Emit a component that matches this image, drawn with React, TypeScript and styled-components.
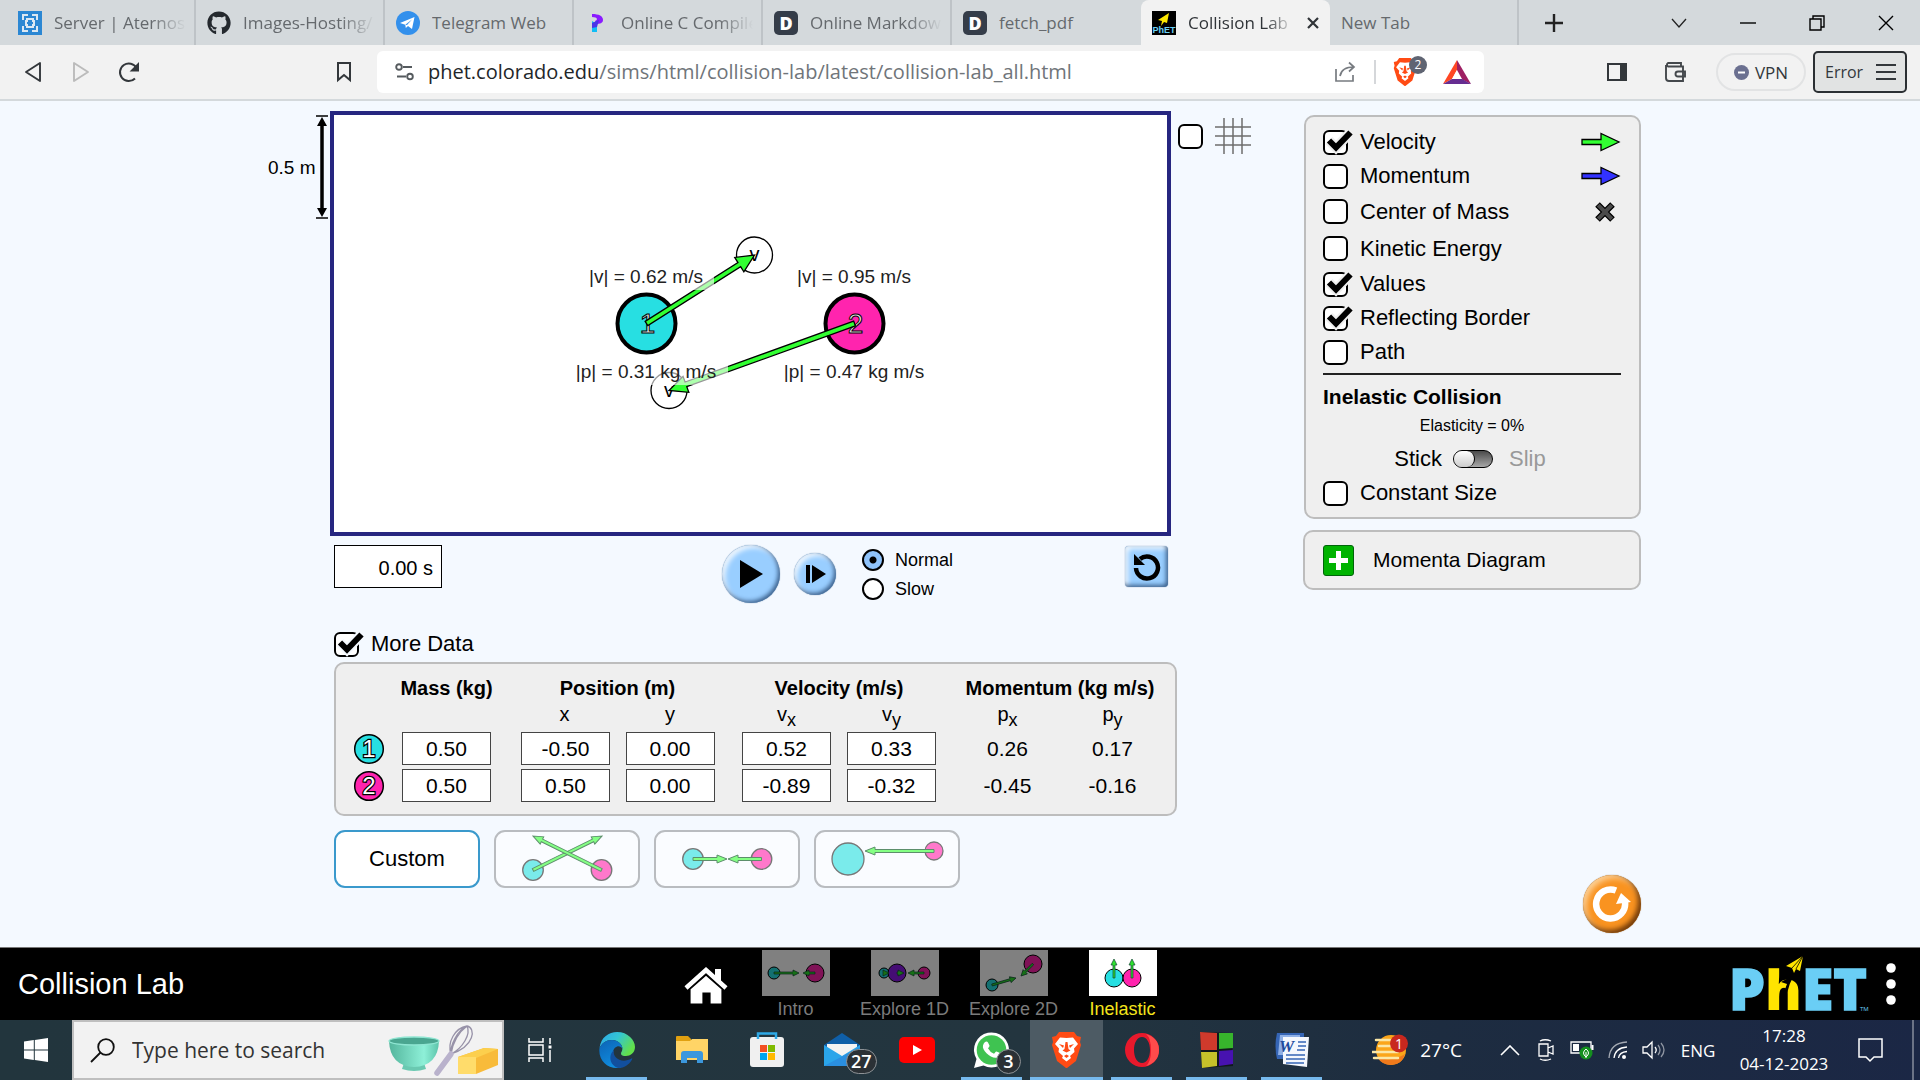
import React from 'react';
import styled, { createGlobalStyle } from 'styled-components';
import { FaGithub } from 'react-icons/fa6';

const ui = '"Open Sans", "Noto Sans", sans-serif';
const sim = '"Liberation Sans", Arial, sans-serif';
const SIM_BG = '#f4f9ff';
const PANEL_BG = '#efefef';
const CYAN = '#27dfe2';
const PINK = '#ff24ae';
const GREEN = '#32ff32';

const GlobalStyle = createGlobalStyle`
  *, *::before, *::after { box-sizing: border-box; }
  body { margin: 0; background: ${SIM_BG}; font-family: ${sim}; color: #000; }
  button { font: inherit; color: inherit; border: 0; padding: 0; background: none; cursor: pointer; }
  input { font: inherit; color: inherit; margin: 0; }
  svg { display: block; flex: none; }
`;

const Page = styled.div`
  display: flex;
  flex-direction: column;
  min-height: 100vh;
`;

/* ---------- Browser window ---------- */

const TabStrip = styled.div`
  display: flex;
  align-items: stretch;
  height: 45px;
  padding-left: 7px;
  background: #d4d9dc;
  font-family: ${ui};
`;

const Tab = styled.button<{ $active?: boolean; $plain?: boolean }>`
  display: flex;
  align-items: center;
  gap: 12px;
  flex: 0 1 189px;
  min-width: 0;
  padding: 0 ${p => (p.$active ? 10 : 8)}px 0 11px;
  font-size: 17px;
  line-height: 24px;
  text-align: left;
  color: ${p => (p.$active ? '#303438' : '#65696d')};
  background: ${p => (p.$active ? '#f2f2f2' : 'transparent')};
  border-radius: ${p => (p.$active ? '8px 8px 0 0' : '0')};
  border-right: ${p => (p.$active || p.$plain ? '0' : '2px solid #bec3c7')};
`;

const TabTitle = styled.span<{ $fade?: boolean }>`
  flex: 1;
  min-width: 0;
  overflow: hidden;
  white-space: nowrap;
  mask-image: ${p => (p.$fade ? 'linear-gradient(to right, #000 74%, transparent)' : 'none')};
`;

const CaptionButton = styled.button`
  display: flex;
  align-items: center;
  justify-content: center;
  width: 69px;
`;

const NewTabButton = styled(CaptionButton)`
  margin-right: auto;
`;

const Toolbar = styled.div`
  display: flex;
  align-items: center;
  height: 56px;
  padding: 0 13px 0 9px;
  background: #f2f2f2;
  border-bottom: 2px solid #d4d9dc;
  font-family: ${ui};
  color: #33373b;
`;

const ToolButton = styled.button<{ $wide?: boolean }>`
  display: flex;
  align-items: center;
  justify-content: center;
  width: ${p => (p.$wide ? 58 : 48)}px;
  height: 42px;
`;

const BookmarkButton = styled(ToolButton)`
  margin-left: 167px;
`;

const AddressBar = styled.div`
  display: flex;
  align-items: center;
  flex: 1;
  min-width: 0;
  height: 42px;
  margin: 0 104px 0 9px;
  padding: 0 13px 0 18px;
  gap: 13px;
  border-radius: 6px;
  background: #fff;
`;

const Url = styled.div`
  flex: 1;
  min-width: 0;
  overflow: hidden;
  white-space: nowrap;
  font-size: 20px;
  line-height: 28px;
  color: #70757a;
  outline: 0;
`;

const UrlHost = styled.span`
  color: #222629;
`;

const AddressActions = styled.div`
  display: flex;
  align-items: center;
  gap: 17px;
`;

const ActionDivider = styled.span`
  width: 2px;
  height: 24px;
  background: #d5d7da;
`;

const BadgeHolder = styled.span`
  position: relative;
  display: flex;
  margin-right: 9px;
`;

const ShieldBadge = styled.span`
  position: absolute;
  top: -2px;
  right: -10px;
  width: 18px;
  height: 18px;
  border-radius: 9px;
  background: #5f6472;
  color: #fff;
  font-size: 12px;
  line-height: 18px;
  text-align: center;
`;

const VpnButton = styled.button`
  display: flex;
  align-items: center;
  justify-content: center;
  gap: 6px;
  width: 90px;
  height: 38px;
  margin: 0 7px 0 12px;
  border: 2px solid #e2e3e4;
  border-radius: 19px;
  font-size: 17px;
`;

const ErrorButton = styled.button`
  display: flex;
  align-items: center;
  justify-content: space-between;
  width: 94px;
  height: 42px;
  padding: 0 9px 0 10px;
  border: 2px solid #2b2f33;
  border-radius: 5px;
  background: #e1e3e3;
  font-size: 16px;
`;

/* ---------- Simulation ---------- */

const SimArea = styled.main`
  flex: 1;
  padding: 10px 11px 14px 0;
  background: ${SIM_BG};
`;

const SimGrid = styled.div`
  display: grid;
  grid-template-columns: 62px minmax(0, 1fr) 338px;
  max-width: 1373px;
  margin: 0 auto;
`;

const Ruler = styled.div`
  display: flex;
  justify-content: space-between;
  height: 105px;
  margin-top: 4px;
  padding-right: 2px;
  font-size: 19px;
  white-space: nowrap;
`;

const RulerLabel = styled.span`
  line-height: 106px;
`;

const Workspace = styled.div`
  display: flex;
  flex-direction: column;
  min-width: 0;
`;

const StageRow = styled.div`
  display: flex;
  align-items: flex-start;
`;

const Stage = styled.div`
  flex: 1;
  min-width: 0;
  border: 4px solid #262680;
  background: #fff;
`;

const GridToggle = styled.label`
  display: flex;
  align-items: center;
  gap: 12px;
  width: 125px;
  height: 36px;
  margin: 7px 0 0 7px;
`;

const Below = styled.div`
  display: flex;
  flex-direction: column;
  align-items: flex-start;
  padding: 9px 126px 0 4px;
`;

const Controls = styled.div`
  display: flex;
  align-self: stretch;
  align-items: flex-start;
  height: 58px;
  margin-right: 9px;
`;

const Timer = styled.output`
  width: 108px;
  height: 43px;
  padding-right: 8px;
  border: 1px solid #000;
  background: #fff;
  font-size: 20px;
  line-height: 44px;
  text-align: right;
`;

const Transport = styled.div`
  display: flex;
  align-items: center;
  gap: 14px;
  margin-left: 280px;
`;

const glossy = `
  display: flex;
  align-items: center;
  justify-content: center;
  background: #99ceff;
  box-shadow: inset -2px -2px 4px rgba(10, 40, 80, .65), inset 3px 3px 5px rgba(255, 255, 255, .85), 0 0 1px #466c94;
`;

const RoundButton = styled.button<{ $size: number }>`
  ${glossy}
  width: ${p => p.$size}px;
  height: ${p => p.$size}px;
  border-radius: 50%;
`;

const RestartButton = styled.button`
  ${glossy}
  width: 43px;
  height: 41px;
  margin: 1px 0 0 auto;
  border-radius: 4px;
`;

const SpeedGroup = styled.div`
  margin-left: 12px;
`;

const RadioLabel = styled.label`
  display: flex;
  align-items: center;
  gap: 11px;
  height: 29px;
  font-size: 18px;
  line-height: 30px;
`;

const Radio = styled.input`
  appearance: none;
  width: 22px;
  height: 22px;
  border: 2px solid #000;
  border-radius: 50%;
  background: #fff;
  &:checked { background: radial-gradient(circle, #000 3px, #8fc3fb 4px); }
`;

const CheckLabel = styled.label<{ $tall?: boolean }>`
  display: flex;
  align-items: center;
  gap: 12px;
  height: ${p => (p.$tall ? 37 : 34)}px;
  font-size: 22px;
`;

const MoreDataLabel = styled(CheckLabel)`
  height: 28px;
  margin: 27px 0 4px;
`;

const CheckSlot = styled.span`
  position: relative;
  display: flex;
`;

const CheckBox = styled.input`
  appearance: none;
  width: 25px;
  height: 25px;
  border: 2px solid #000;
  border-radius: 6px;
  background: #fff;
  & + svg { display: none; }
  &:checked + svg { display: block; }
`;

const CheckMark = styled.svg`
  position: absolute;
  left: 0;
  top: -2px;
  pointer-events: none;
`;

const Panel = styled.section`
  border: 2px solid #bdbdbd;
  border-radius: 10px;
  background: ${PANEL_BG};
`;

const DataPanel = styled(Panel)`
  align-self: stretch;
  padding: 10px 0;
`;

const DataTable = styled.table`
  table-layout: fixed;
  border-collapse: collapse;
  width: 829px;
  font-size: 21px;
  text-align: center;
`;

const Cell = styled.td<{ $lead?: number }>`
  height: 37px;
  padding: 0 0 0 ${p => p.$lead ?? 0}px;
`;

const Head = styled.th<{ $lead?: number; $sub?: boolean }>`
  height: 28px;
  padding: 0 0 ${p => (p.$sub ? 4 : 0)}px ${p => p.$lead ?? 0}px;
  font-size: 20px;
  font-weight: ${p => (p.$sub ? 400 : 700)};
  line-height: 24px;
  white-space: nowrap;
`;

const Sub = styled.sub`
  font-size: 18px;
  line-height: 0;
`;

const NumberBox = styled.input`
  display: block;
  width: 89px;
  height: 33px;
  margin: 0 auto;
  padding: 0;
  border: 1px solid #444;
  background: #fff;
  text-align: center;
`;

const BallIcon = styled.svg`
  margin: 0 auto;
`;

const Presets = styled.div`
  display: flex;
  gap: 14px;
  margin-top: 14px;
`;

const Preset = styled.button<{ $active?: boolean }>`
  display: flex;
  align-items: center;
  justify-content: center;
  width: 146px;
  height: 58px;
  border: 2px solid ${p => (p.$active ? '#3a99cc' : '#b9bcc0')};
  border-radius: 11px;
  background: ${p => (p.$active ? '#fff' : '#fafcff')};
  font-size: 22px;
`;

const Side = styled.aside`
  display: flex;
  flex-direction: column;
  margin-top: 4px;
`;

const ControlPanel = styled(Panel)`
  margin-left: 1px;
  padding: 8px 18px 7px 17px;
`;

const RowWithIcon = styled.div`
  display: flex;
  align-items: center;
  justify-content: space-between;
`;

const Rule = styled.hr`
  height: 2px;
  margin: 4px 0 9px;
  border: 0;
  background: #222;
`;

const PanelTitle = styled.h2`
  margin: 0;
  font-size: 21px;
  line-height: 26px;
`;

const Elasticity = styled.p`
  margin: 0;
  font-size: 16px;
  line-height: 32px;
  text-align: center;
`;

const StickSlip = styled.div`
  display: flex;
  align-items: center;
  justify-content: center;
  gap: 11px;
  height: 34px;
  padding-right: 4px;
  font-size: 22px;
`;

const Muted = styled.span`
  margin-left: 5px;
  color: #999;
`;

const Toggle = styled.input`
  appearance: none;
  display: flex;
  width: 40px;
  height: 18px;
  border: 1px solid #000;
  border-radius: 9px;
  background: linear-gradient(#4a4a4a, #a8a8a8);
  &::before {
    content: '';
    width: 21px;
    height: 16px;
    border-right: 1px solid #000;
    border-radius: 8px;
    background: linear-gradient(#fff, #ccc);
  }
`;

const MomentaPanel = styled(Panel)`
  display: flex;
  align-items: center;
  gap: 19px;
  height: 60px;
  margin-top: 11px;
  padding-left: 18px;
  font-size: 21px;
`;

const ExpandButton = styled.button`
  display: flex;
  align-items: center;
  justify-content: center;
  width: 31px;
  height: 31px;
  border: 1px solid #00640a;
  border-radius: 3px;
  background: #00b300;
`;

const ResetAll = styled.button`
  display: flex;
  align-items: center;
  justify-content: center;
  align-self: flex-end;
  width: 58px;
  height: 58px;
  margin-top: 285px;
  border-radius: 50%;
  background: #f99320;
  box-shadow: inset -3px -3px 5px rgba(70, 30, 0, .75), inset 3px 3px 6px rgba(255, 230, 190, .8), 0 0 1px #7a4a10;
`;

/* ---------- Simulation navigation bar ---------- */

const NavBar = styled.nav`
  display: grid;
  grid-template-columns: 1fr auto 1fr;
  align-items: center;
  height: 73px;
  padding: 0 24px 0 18px;
  background: #000;
  color: #fff;
  border-top: 1px solid #777;
`;

const SimTitle = styled.h1`
  margin: 0;
  font-size: 29px;
  font-weight: 400;
`;

const Screens = styled.div`
  display: flex;
  align-items: center;
  padding: 2px 53px 0 0;
`;

const HomeButton = styled.button`
  margin-right: 13px;
`;

const ScreenButton = styled.button<{ $active?: boolean }>`
  display: flex;
  flex-direction: column;
  align-items: center;
  gap: 2px;
  width: 109px;
  font-size: 18px;
  line-height: 22px;
  color: ${p => (p.$active ? '#f5e51b' : '#7b7b7b')};
  & svg { opacity: ${p => (p.$active ? 1 : 0.5)}; background: #fff; }
`;

const NavRight = styled.div`
  display: flex;
  align-items: center;
  justify-content: flex-end;
  gap: 16px;
`;

/* ---------- Desktop taskbar ---------- */

const Taskbar = styled.footer`
  display: flex;
  align-items: center;
  height: 60px;
  background: linear-gradient(to right, #22353d 0%, #23353f 55%, #1d2c40 75%, #1b2745 100%);
  color: #fff;
  font-family: ${ui};
`;

const StartButton = styled.button`
  display: flex;
  justify-content: center;
  width: 72px;
`;

const SearchBox = styled.label`
  display: flex;
  align-items: center;
  gap: 17px;
  width: 432px;
  height: 60px;
  padding: 0 4px 0 16px;
  border: 2px solid #bfbfbf;
  background: #f2f2f2;
  color: #222;
`;

const SearchInput = styled.input`
  flex: 1;
  min-width: 0;
  padding: 0;
  border: 0;
  background: none;
  font-size: 21px;
  outline: 0;
  &::placeholder { color: #333; opacity: 1; }
`;

const TaskButton = styled.button<{ $open?: boolean; $active?: boolean }>`
  position: relative;
  display: flex;
  align-items: center;
  justify-content: center;
  width: ${p => (p.$active ? 73 : 75)}px;
  height: 60px;
  margin: 0 ${p => (p.$active ? 1 : 0)}px;
  background: ${p => (p.$active ? '#4d5b64' : 'none')};
  &::after {
    content: '';
    position: absolute;
    bottom: 0;
    left: ${p => (p.$active ? 0 : 7)}px;
    right: ${p => (p.$active ? 0 : 7)}px;
    height: 3px;
    background: ${p => (p.$open || p.$active ? '#76b9ed' : 'transparent')};
  }
`;

const TaskBadge = styled.span`
  position: absolute;
  left: 42px;
  top: 29px;
  min-width: 25px;
  height: 25px;
  padding: 0 4px;
  border: 1px solid #8d9296;
  border-radius: 13px;
  background: #2b3136;
  font-size: 18px;
  font-weight: 600;
  line-height: 23px;
`;

const Tray = styled.div`
  display: flex;
  align-items: center;
  margin-left: auto;
  font-size: 17px;
`;

const TrayButton = styled.button<{ $w: number }>`
  display: flex;
  align-items: center;
  justify-content: center;
  width: ${p => p.$w}px;
  height: 60px;
`;

const ActionCenterButton = styled(TrayButton)`
  padding-right: 8px;
`;

const Weather = styled.button`
  display: flex;
  align-items: center;
  gap: 12px;
  margin-right: 30px;
  font-size: 19px;
`;

const Clock = styled.button`
  width: 104px;
  margin-left: 8px;
  font-size: 17px;
  line-height: 28px;
  text-align: center;
`;

const ShowDesktop = styled.button`
  width: 8px;
  height: 60px;
  border-left: 2px solid #6b7386;
`;

/* ---------- Drawings ---------- */

type Pt = [number, number];

function Arrow({ from, to, w = 5, head = 18, hw = 17, fill = GREEN, stroke = '#000', sw = 1.3 }: {
  from: Pt; to: Pt; w?: number; head?: number; hw?: number; fill?: string; stroke?: string; sw?: number;
}) {
  const dx = to[0] - from[0];
  const dy = to[1] - from[1];
  const len = Math.hypot(dx, dy);
  const deg = (Math.atan2(dy, dx) * 180) / Math.PI;
  const n = len - head;
  return (
    <polygon
      transform={`translate(${from[0]} ${from[1]}) rotate(${deg})`}
      points={`0,${-w / 2} ${n},${-w / 2} ${n},${-hw / 2} ${len},0 ${n},${hw / 2} ${n},${w / 2} 0,${w / 2}`}
      fill={fill}
      stroke={stroke}
      strokeWidth={sw}
    />
  );
}

function Ball({ x, y, color, n }: { x: number; y: number; color: string; n: number }) {
  return (
    <g>
      <circle cx={x} cy={y} r="29" fill={color} stroke="#000" strokeWidth="4" />
      <text x={x + 1} y={y + 9} fontSize="28" textAnchor="middle" fill="#e8e8e8" stroke="#000" strokeWidth="1">{n}</text>
    </g>
  );
}

function Reading({ x, y, w, text }: { x: number; y: number; w: number; text: string }) {
  return (
    <g>
      <rect x={x - w / 2} y={y - 20} width={w} height="27" fill="#fff" opacity="0.6" />
      <text x={x} y={y} fontSize="19" textAnchor="middle" fill="#222">{text}</text>
    </g>
  );
}

function Collision() {
  return (
    <svg width="100%" viewBox="334 115 833 417" fontFamily={sim} role="img" aria-label="Play area with two balls">
      <g fill="none" stroke="#000" strokeWidth="1.3">
        <circle cx="754.5" cy="255" r="18" />
        <circle cx="669" cy="390.5" r="18" />
      </g>
      <text x="754.5" y="261" fontSize="20" textAnchor="middle">v</text>
      <text x="669" y="397" fontSize="20" textAnchor="middle">v</text>
      <Ball x={646.5} y={323.5} color={CYAN} n={1} />
      <Ball x={854.5} y={323.5} color={PINK} n={2} />
      <Arrow from={[646.5, 323.5]} to={[754.5, 255]} />
      <Arrow from={[854.5, 323.5]} to={[669, 390.5]} />
      <Reading x={646} y={283} w={136} text="|v| = 0.62 m/s" />
      <Reading x={854} y={283} w={136} text="|v| = 0.95 m/s" />
      <Reading x={646} y={378} w={164} text="|p| = 0.31 kg m/s" />
      <Reading x={854} y={378} w={164} text="|p| = 0.47 kg m/s" />
    </svg>
  );
}

function Check({ label, checked, bg = PANEL_BG }: { label: string; checked?: boolean; bg?: string }) {
  return (
    <CheckSlot>
      <CheckBox type="checkbox" defaultChecked={checked} aria-label={label} />
      <CheckMark width="30" height="28" viewBox="0 0 30 28" fill="none">
        <path d="M6 12.5 13 19.5 27.5 4.5" stroke={bg} strokeWidth="10" />
        <path d="M6 12.5 13 19.5 27.5 4.5" stroke="#000" strokeWidth="6" />
      </CheckMark>
    </CheckSlot>
  );
}

function SmallBall({ n, color }: { n: number; color: string }) {
  return (
    <BallIcon width="32" height="32" viewBox="0 0 32 32" role="img" aria-label={`Ball ${n}`}>
      <circle cx="16" cy="16" r="14.3" fill={color} stroke="#000" strokeWidth="1.5" />
      <text x="16" y="24" fontSize="24" fontFamily={sim} textAnchor="middle" fill="#fff" stroke="#000" strokeWidth="2.4" paintOrder="stroke">{n}</text>
    </BallIcon>
  );
}

function PresetArt({ kind }: { kind: number }) {
  const a = { fill: '#84ff84', stroke: '#5c8f6b', sw: 1, w: 3, head: 10, hw: 8 };
  const c = { stroke: '#777', strokeWidth: 1.3 };
  return (
    <svg width="142" height="54" viewBox="-1 0 142 54">
      {kind === 0 && <>
        <circle cx="36" cy="38" r="10.3" fill="#7aebeb" {...c} />
        <circle cx="104.5" cy="38" r="10.3" fill="#ff78cb" {...c} />
        <Arrow from={[36, 38]} to={[105, 4]} {...a} />
        <Arrow from={[104.5, 38]} to={[36, 4]} {...a} />
      </>}
      {kind === 1 && <>
        <circle cx="36" cy="27" r="10.3" fill="#7aebeb" {...c} />
        <circle cx="104.5" cy="27" r="10.3" fill="#ff78cb" {...c} />
        <Arrow from={[36, 27]} to={[70, 27]} {...a} />
        <Arrow from={[104.5, 27]} to={[71, 27]} {...a} />
      </>}
      {kind === 2 && <>
        <circle cx="31" cy="27" r="16" fill="#7aebeb" {...c} />
        <circle cx="117" cy="19" r="9" fill="#ff78cb" {...c} />
        <Arrow from={[117, 19]} to={[48, 19]} {...a} />
      </>}
    </svg>
  );
}

function ScreenArt({ kind }: { kind: number }) {
  const a = { w: 2, head: 6, hw: 6, sw: 0.7, fill: '#2fe02f', stroke: '#143' };
  const c = { stroke: '#000', strokeWidth: 1 };
  return (
    <svg width="68" height="46" viewBox="0 0 68 46">
      {kind === 0 && <>
        <circle cx="12" cy="23" r="6" fill={CYAN} {...c} /><circle cx="53" cy="23" r="9" fill={PINK} {...c} />
        <Arrow from={[12, 23]} to={[37, 23]} {...a} /><Arrow from={[53, 23]} to={[41, 23]} {...a} />
      </>}
      {kind === 1 && <>
        <circle cx="13" cy="23" r="5" fill={CYAN} {...c} /><circle cx="26" cy="23" r="9" fill="#8a1be8" {...c} /><circle cx="53" cy="23" r="6" fill={PINK} {...c} />
        <Arrow from={[12, 23]} to={[18, 23]} {...a} /><Arrow from={[26, 23]} to={[33, 23]} {...a} /><Arrow from={[53, 23]} to={[37, 23]} {...a} />
      </>}
      {kind === 2 && <>
        <circle cx="12" cy="35" r="6" fill={CYAN} {...c} /><circle cx="53" cy="14" r="9" fill={PINK} {...c} />
        <Arrow from={[12, 35]} to={[36, 28]} {...a} /><Arrow from={[53, 14]} to={[41, 26]} {...a} />
      </>}
      {kind === 3 && <>
        <circle cx="25" cy="28" r="9" fill={CYAN} {...c} /><circle cx="43" cy="28" r="9" fill={PINK} {...c} />
        <Arrow from={[25, 28]} to={[25, 9]} {...a} /><Arrow from={[43, 28]} to={[43, 9]} {...a} />
      </>}
    </svg>
  );
}

function BraveLion({ width, height }: { width: number; height: number }) {
  return (
    <svg width={width} height={height} viewBox="0 0 31 36">
      <path d="M8 0h15l3 4 4 1-1 5 1 3-5 16-9 7h-1l-9-7L1 13l1-3-1-5 4-1z" fill="#ff4b14" />
      <path d="M15.500 6 9 5.500 4 12l4 4.500-.5 3.500 4.500 4-1 2 4.500 3.500L20 26l-1-2 4.500-4-.5-3.500 4-4.500-5-6.500z" fill="#fff" />
      <path d="M8 12l5 1.500-1 2.500zM23 12l-5 1.500 1 2.500zM14.500 10h2l1 7 2 1.500-4 2-4-2 2-1.500zM13 24l2.500-1.500L18 24l-2.500 2z" fill="#ff4b14" />
    </svg>
  );
}

function EdgeLogo() {
  return (
    <svg width="36" height="36" viewBox="0 0 36 36">
      <defs>
        <linearGradient id="edgeTop" x1="0" y1="0" x2="1" y2=".5"><stop offset="0" stopColor="#2ba6ea" /><stop offset=".5" stopColor="#33c5d4" /><stop offset="1" stopColor="#62e04b" /></linearGradient>
        <linearGradient id="edgeLeft" x1="0" y1="0" x2=".6" y2="1"><stop offset="0" stopColor="#0c63b5" /><stop offset="1" stopColor="#1090e2" /></linearGradient>
      </defs>
      <path d="M.5 16C2 5 10 0 18 0c11 0 18 8 18 15 0 6-5 9-9 9-5 0-6-2-4-5 2-5-3-11-10-11C7 8 3 11 .5 16z" fill="url(#edgeTop)" />
      <path d="M.5 16C3 11 7 8 13 8c6 0 10.500 4.500 10.500 9-2-5-9-3-9.500 3-.5 8 7 13 14 11-3 3-6 5-10 5C7 36-1 27 .5 16z" fill="url(#edgeLeft)" />
      <path d="M15 18c-2 8 8 14 17.500 8.500.8-.4 1 .2.500 1C30 33 25 36 20 36c-8-1-12-12-5-18z" fill="#124f9d" />
    </svg>
  );
}

function Favicon({ kind }: { kind: string }) {
  if (kind === 'github') return <FaGithub size={24} color="#24292e" />;
  if (kind === 'telegram') return (
    <svg width="24" height="24" viewBox="0 0 24 24"><circle cx="12" cy="12" r="12" fill="#3390ec" /><path d="M4 12 18.500 6 16 18 12 15 9.800 17 9.300 13.800z" fill="#fff" /><path d="M9.300 13.800 16 8.500 11 14z" fill="#3390ec" /></svg>
  );
  if (kind === 'aternos') return (
    <svg width="24" height="24" viewBox="0 0 24 24" fill="none" stroke="#dce8f2" strokeWidth="2"><path fill="#2b87d3" stroke="none" d="M0 0h24v24H0z" /><path d="M10 4H5v5M14 4h5v5M10 20H5v-5M14 20h5v-5M9 8h6v2h1v4h-1v2H9v-2H8v-4h1z" /></svg>
  );
  if (kind === 'compiler') return (
    <svg width="24" height="24" viewBox="0 0 24 24"><path d="M7 3c7 0 11 2 11 6 0 3-3 4-7 4l-1-3c3-1 3-4-3-4z" fill="#8a1bff" /><path d="M7 10l5 3v8H7z" fill="#11bdf5" /><path d="M7 12l7-3-2 7-5 1z" fill="#4b35e8" /></svg>
  );
  if (kind === 'phet') return (
    <svg width="24" height="24" viewBox="0 0 24 24"><path d="M0 0h24v24H0z" /><path d="M17 2 6 9l4 1-1 5 3-4 3 1z" fill="#fde800" /><text x="12" y="22" fontSize="9" fontWeight="700" fontFamily={sim} textAnchor="middle" fill="#6ad0f6">PhET</text></svg>
  );
  return (
    <svg width="24" height="24" viewBox="0 0 24 24"><rect width="24" height="24" rx="5" fill="#353d49" /><text x="12" y="18.500" fontSize="18" fontWeight="800" fontFamily={ui} textAnchor="middle" fill="#fff">D</text></svg>
  );
}

const tabs = [
  { icon: 'aternos', title: 'Server | Aternos |', fade: true },
  { icon: 'github', title: 'Images-Hosting/', fade: true },
  { icon: 'telegram', title: 'Telegram Web' },
  { icon: 'compiler', title: 'Online C Compiler', fade: true },
  { icon: 'docs', title: 'Online Markdown', fade: true },
  { icon: 'docs', title: 'fetch_pdf', plain: true },
];

function BrowserChrome() {
  return (
    <header>
      <TabStrip>
        {tabs.map(t => (
          <Tab key={t.title} $plain={t.plain}>
            <Favicon kind={t.icon} />
            <TabTitle $fade={t.fade}>{t.title}</TabTitle>
          </Tab>
        ))}
        <Tab $active>
          <Favicon kind="phet" />
          <TabTitle $fade>Collision Lab</TabTitle>
          <svg width="14" height="14" viewBox="0 0 14 14" stroke="#303438" strokeWidth="2.200"><path d="M2 2l10 10M12 2 2 12" /></svg>
        </Tab>
        <Tab><TabTitle>New Tab</TabTitle></Tab>
        <NewTabButton aria-label="New tab">
          <svg width="18" height="18" viewBox="0 0 18 18" stroke="#222" strokeWidth="2.400"><path d="M9 0v18M0 9h18" /></svg>
        </NewTabButton>
        <CaptionButton aria-label="Search tabs"><svg width="16" height="10" viewBox="0 0 16 10" fill="none" stroke="#222" strokeWidth="1.300"><path d="M1 1l7 8 7-8" /></svg></CaptionButton>
        <CaptionButton aria-label="Minimize"><svg width="16" height="16" viewBox="0 0 16 16" stroke="#000" strokeWidth="1.400"><path d="M0 8h16" /></svg></CaptionButton>
        <CaptionButton aria-label="Restore"><svg width="16" height="16" viewBox="0 0 16 16" fill="none" stroke="#000" strokeWidth="1.400"><path d="M1 4h11v11H1zM4 4V1h11v11h-3" /></svg></CaptionButton>
        <CaptionButton aria-label="Close"><svg width="16" height="16" viewBox="0 0 16 16" stroke="#000" strokeWidth="1.400"><path d="M1 1l14 14M15 1 1 15" /></svg></CaptionButton>
      </TabStrip>
      <Toolbar>
        <ToolButton aria-label="Back"><svg width="18" height="22" viewBox="0 0 18 22" fill="none" stroke="#33373b" strokeWidth="1.900" strokeLinejoin="round"><path d="M16 2v18L2 11z" /></svg></ToolButton>
        <ToolButton aria-label="Forward"><svg width="18" height="22" viewBox="0 0 18 22" fill="none" stroke="#bbb" strokeWidth="1.900" strokeLinejoin="round"><path d="M2 2v18l14-9z" /></svg></ToolButton>
        <ToolButton aria-label="Reload"><svg width="22" height="22" viewBox="0 0 22 22" fill="none" stroke="#33373b" strokeWidth="2"><path d="M17 17.500A8.800 8.800 0 1 1 18.500 7" /><path d="M20 3.500v6h-6z" fill="#33373b" /></svg></ToolButton>
        <BookmarkButton aria-label="Bookmark"><svg width="16" height="22" viewBox="0 0 16 22" fill="none" stroke="#33373b" strokeWidth="2"><path d="M2 2h12v17l-6-5-6 5z" /></svg></BookmarkButton>
        <AddressBar>
          <svg width="20" height="18" viewBox="0 0 20 18" fill="none" stroke="#555a5e" strokeWidth="1.900"><circle cx="4" cy="4" r="2.800" /><path d="M8 4h9M2 13.500h9" /><circle cx="15" cy="13.500" r="2.800" /></svg>
          <Url role="textbox" aria-label="Address" tabIndex={0}>
            <UrlHost>phet.colorado.edu</UrlHost>/sims/html/collision-lab/latest/collision-lab_all.html
          </Url>
          <AddressActions>
            <svg width="23" height="22" viewBox="0 0 23 22" fill="none" stroke="#777b80" strokeWidth="1.700"><path d="M2 8v12h17v-6M6 15c1-6 5-9 14-9M15 1.500l5 4.500-5 4.500" /></svg>
            <ActionDivider />
            <BadgeHolder><BraveLion width={24} height={28} /><ShieldBadge>2</ShieldBadge></BadgeHolder>
            <svg width="28" height="24" viewBox="0 0 28 24"><path d="M14 0 28 24 14 17z" fill="#9e1f63" /><path d="M14 0 0 24l9-5 5-9z" fill="#ff4724" /><path d="M0 24h28l-9-5H9z" fill="#662d91" /><path d="M14 10l5 9H9z" fill="#fff" /></svg>
          </AddressActions>
        </AddressBar>
        <ToolButton $wide aria-label="Sidebar"><svg width="20" height="18" viewBox="0 0 20 18" fill="none" stroke="#33373b" strokeWidth="2"><path d="M1 1h18v16H1z" /><path d="M14 1h5v16h-5z" fill="#33373b" /></svg></ToolButton>
        <ToolButton $wide aria-label="Wallet"><svg width="22" height="20" viewBox="0 0 22 20" fill="none" stroke="#44484c" strokeWidth="1.900"><path d="M19 6V4.500H4a2 2 0 0 1 0-3.500h13v3M2 3v13q0 3 3 3h14V6M21 9.500h-7q-2.500 0-2.500 2.500t2.500 2.500h7z" /></svg></ToolButton>
        <VpnButton>
          <svg width="15" height="15" viewBox="0 0 15 15"><circle cx="7.500" cy="7.500" r="7.500" fill="#6b7090" /><path d="M4 7.500h7" stroke="#fff" strokeWidth="2" /></svg>
          VPN
        </VpnButton>
        <ErrorButton>
          Error
          <svg width="20" height="16" viewBox="0 0 20 16" stroke="#33373b" strokeWidth="1.900"><path d="M0 1h20M0 8h20M0 15h20" /></svg>
        </ErrorButton>
      </Toolbar>
    </header>
  );
}

const rows = [
  { n: 1, color: CYAN, mass: '0.50', pos: ['-0.50', '0.00'], vel: ['0.52', '0.33'], mom: ['0.26', '0.17'] },
  { n: 2, color: PINK, mass: '0.50', pos: ['0.50', '0.00'], vel: ['-0.89', '-0.32'], mom: ['-0.45', '-0.16'] },
];

function BallData() {
  return (
    <DataPanel>
      <DataTable>
        <colgroup>
          {[58, 105, 119, 104, 117, 105, 116, 105].map((w, i) => <col key={i} width={w} />)}
        </colgroup>
        <thead>
          <tr>
            <Head />
            <Head>Mass (kg)</Head>
            <Head colSpan={2} $lead={14}>Position (m)</Head>
            <Head colSpan={2} $lead={12}>Velocity (m/s)</Head>
            <Head colSpan={2} $lead={11}>Momentum (kg m/s)</Head>
          </tr>
          <tr>
            <Head $sub /><Head $sub />
            <Head $sub $lead={12}>x</Head><Head $sub>y</Head>
            <Head $sub $lead={12}>v<Sub>x</Sub></Head><Head $sub>v<Sub>y</Sub></Head>
            <Head $sub $lead={11}>p<Sub>x</Sub></Head><Head $sub>p<Sub>y</Sub></Head>
          </tr>
        </thead>
        <tbody>
          {rows.map(r => (
            <tr key={r.n}>
              <Cell $lead={8}><SmallBall n={r.n} color={r.color} /></Cell>
              <Cell><NumberBox aria-label={`Mass ${r.n}`} defaultValue={r.mass} /></Cell>
              <Cell $lead={14}><NumberBox aria-label={`Position x ${r.n}`} defaultValue={r.pos[0]} /></Cell>
              <Cell><NumberBox aria-label={`Position y ${r.n}`} defaultValue={r.pos[1]} /></Cell>
              <Cell $lead={12}><NumberBox aria-label={`Velocity x ${r.n}`} defaultValue={r.vel[0]} /></Cell>
              <Cell><NumberBox aria-label={`Velocity y ${r.n}`} defaultValue={r.vel[1]} /></Cell>
              <Cell $lead={11}>{r.mom[0]}</Cell>
              <Cell>{r.mom[1]}</Cell>
            </tr>
          ))}
        </tbody>
      </DataTable>
    </DataPanel>
  );
}

function Simulation() {
  return (
    <SimArea>
      <SimGrid>
        <Ruler>
          <RulerLabel>0.5 m</RulerLabel>
          <svg width="12" height="104" viewBox="0 0 12 104" stroke="#000"><path d="M0 1h12M0 103h12" strokeWidth="1.500" /><path d="M6 8v88" strokeWidth="3.500" /><path d="M6 2l5 9H1zM6 102l5-9H1z" stroke="none" /></svg>
        </Ruler>
        <Workspace>
          <StageRow>
            <Stage><Collision /></Stage>
            <GridToggle>
              <Check label="Grid" bg={SIM_BG} />
              <svg width="36" height="36" viewBox="0 0 36 36" stroke="#6d6d6d" strokeWidth="1.500"><path d="M9 0v36M18 0v36M27 0v36M0 9h36M0 18h36M0 27h36" /></svg>
            </GridToggle>
          </StageRow>
          <Below>
            <Controls>
              <Timer>0.00 s</Timer>
              <Transport>
                <RoundButton $size={58} aria-label="Play"><svg width="24" height="30" viewBox="0 0 24 30"><path d="M1 1v28l23-14z" /></svg></RoundButton>
                <RoundButton $size={42} aria-label="Step forward"><svg width="21" height="20" viewBox="0 0 21 20"><path d="M1 1h4v18H1zM7 1v18l14-9z" /></svg></RoundButton>
                <SpeedGroup role="radiogroup" aria-label="Speed">
                  <RadioLabel><Radio type="radio" name="speed" defaultChecked />Normal</RadioLabel>
                  <RadioLabel><Radio type="radio" name="speed" />Slow</RadioLabel>
                </SpeedGroup>
              </Transport>
              <RestartButton aria-label="Restart">
                <svg width="28" height="28" viewBox="0 0 28 28" fill="none" stroke="#000"><path d="M3 15A11 11 0 1 0 7 6" strokeWidth="4.500" /><path d="M1 1v11h11z" fill="#000" stroke="none" /></svg>
              </RestartButton>
            </Controls>
            <MoreDataLabel><Check label="More Data" checked bg={SIM_BG} />More Data</MoreDataLabel>
            <BallData />
            <Presets>
              <Preset $active>Custom</Preset>
              <Preset aria-label="Crossing"><PresetArt kind={0} /></Preset>
              <Preset aria-label="Head-on"><PresetArt kind={1} /></Preset>
              <Preset aria-label="Glancing"><PresetArt kind={2} /></Preset>
            </Presets>
          </Below>
        </Workspace>
        <Side>
          <ControlPanel>
            <RowWithIcon>
              <CheckLabel><Check label="Velocity" checked />Velocity</CheckLabel>
              <svg width="40" height="20" viewBox="0 0 40 20"><Arrow from={[1, 10]} to={[38, 10]} fill={GREEN} /></svg>
            </RowWithIcon>
            <RowWithIcon>
              <CheckLabel><Check label="Momentum" />Momentum</CheckLabel>
              <svg width="40" height="20" viewBox="0 0 40 20"><Arrow from={[1, 10]} to={[38, 10]} fill="#3232ff" /></svg>
            </RowWithIcon>
            <RowWithIcon>
              <CheckLabel $tall><Check label="Center of Mass" />Center of Mass</CheckLabel>
              <svg width="30" height="20" viewBox="0 0 30 20"><path d="M6.500 2.500 21.500 17.500M21.500 2.500 6.500 17.500" stroke="#000" strokeWidth="6.500" /><path d="M7.200 3.200 20.800 16.800M20.800 3.200 7.200 16.800" stroke="#4a4a4a" strokeWidth="4" /></svg>
            </RowWithIcon>
            <CheckLabel $tall><Check label="Kinetic Energy" />Kinetic Energy</CheckLabel>
            <CheckLabel><Check label="Values" checked />Values</CheckLabel>
            <CheckLabel><Check label="Reflecting Border" checked />Reflecting Border</CheckLabel>
            <CheckLabel><Check label="Path" />Path</CheckLabel>
            <Rule />
            <PanelTitle>Inelastic Collision</PanelTitle>
            <Elasticity>Elasticity = 0%</Elasticity>
            <StickSlip>
              <span>Stick</span>
              <Toggle type="checkbox" role="switch" aria-label="Slip" />
              <Muted>Slip</Muted>
            </StickSlip>
            <CheckLabel><Check label="Constant Size" />Constant Size</CheckLabel>
          </ControlPanel>
          <MomentaPanel>
            <ExpandButton aria-label="Expand"><svg width="19" height="19" viewBox="0 0 19 19" stroke="#fff" strokeWidth="5"><path d="M9.500 0v19M0 9.500h19" /></svg></ExpandButton>
            Momenta Diagram
          </MomentaPanel>
          <ResetAll aria-label="Reset all">
            <svg width="40" height="38" viewBox="0 0 40 38" fill="none"><path d="M24 5.500A14.500 14.500 0 1 0 33 17" stroke="#fff" strokeWidth="6.500" /><path d="M29 8 24 19l15-2z" fill="#fff" /></svg>
          </ResetAll>
        </Side>
      </SimGrid>
    </SimArea>
  );
}

const screens = ['Intro', 'Explore 1D', 'Explore 2D', 'Inelastic'];

function Navigation() {
  return (
    <NavBar>
      <SimTitle>Collision Lab</SimTitle>
      <Screens>
        <HomeButton aria-label="Home">
          <svg width="44" height="37" viewBox="0 0 44 37" fill="none"><path d="M2 21 22 3l20 18" stroke="#fff" strokeWidth="4.500" /><path d="M31 2h6v14l-6-5z" fill="#fff" /><path d="M6 22 22 8l16 14v15H26V26h-7v11H6z" fill="#fff" stroke="#000" strokeWidth="1.200" /></svg>
        </HomeButton>
        {screens.map((s, i) => (
          <ScreenButton key={s} $active={i === 3}><ScreenArt kind={i} />{s}</ScreenButton>
        ))}
      </Screens>
      <NavRight>
        <svg width="138" height="58" viewBox="0 0 138 58" fontFamily={ui} fontWeight="800" role="img" aria-label="PhET">
          <g fontSize="57" fill="#6acef5" stroke="#6acef5" strokeWidth="1.500">
            <text x="-3" y="55">P</text>
            <text x="70" y="55">ET</text>
          </g>
          <text x="33" y="55" fontSize="55" fill="#ffe400">h</text>
          <path d="M49 27q6-4 12-5-8 14-7 34h-4q0-16 5-27z" fill="#000" />
          <path d="M71 1 54 11l6 2 2 5 2-4 4 2z" fill="#ffe400" />
          <path d="M71 1 60 13M71 1l-7 13" stroke="#000" strokeWidth=".8" />
          <text x="128" y="56" fontSize="6" fontWeight="400" fill="#6acef5">TM</text>
        </svg>
        <svg width="10" height="42" viewBox="0 0 10 42" fill="#fff"><circle cx="5" cy="5" r="4.800" /><circle cx="5" cy="21" r="4.800" /><circle cx="5" cy="37" r="4.800" /></svg>
      </NavRight>
    </NavBar>
  );
}

function SearchArt() {
  return (
    <svg width="112" height="52" viewBox="386 1023 112 52">
      <defs>
        <linearGradient id="bowl"><stop offset="0" stopColor="#53b59c" /><stop offset=".7" stopColor="#8ef0d8" /><stop offset="1" stopColor="#5cc4aa" /></linearGradient>
      </defs>
      <path d="M404 1062h20l2 6q-12 4-24 0z" fill="#6ac9b1" />
      <path d="M389 1040q1 25 25 26 24-1 25-26z" fill="url(#bowl)" />
      <ellipse cx="414" cy="1040" rx="25" ry="4" fill="#4aa690" stroke="#8fe6d2" strokeWidth="1.300" />
      <g fill="none" stroke="#9792a8" strokeWidth="1.300">
        <path d="M451 1053c-4-12 4-26 16-28 9 2 8 20-16 28zM451 1053c2-12 8-22 16-28 4 8-4 22-16 28zM451 1053c-1-8 6-24 16-28" />
      </g>
      <path d="M451 1053 437 1072" stroke="#b9b2cc" strokeWidth="5.500" strokeLinecap="round" />
      <path d="M458 1056l26-9 14 1v16l-22 9-18-1z" fill="#f8bb3a" />
      <path d="M458 1056l26-9 14 1-22 9z" fill="#fccf4d" />
      <path d="M458 1056h18v17h-18z" fill="#ffdc6b" />
    </svg>
  );
}

function DesktopBar() {
  return (
    <Taskbar>
      <StartButton aria-label="Start"><svg width="24" height="24" viewBox="0 0 24 24" fill="#fff"><path d="M0 3.500 9.800 2v9.500H0zM10.800 1.900 24 0v11.500H10.800zM0 12.500h9.800V22L0 20.500zM10.800 12.500H24V24l-13.200-1.900z" /></svg></StartButton>
      <SearchBox>
        <svg width="25" height="25" viewBox="0 0 25 25" fill="none" stroke="#111" strokeWidth="1.800"><circle cx="16" cy="9" r="7.800" /><path d="M10.500 14.500 1 24" /></svg>
        <SearchInput type="text" placeholder="Type here to search" aria-label="Search" />
        <SearchArt />
      </SearchBox>
      <TaskButton aria-label="Task view"><svg width="28" height="24" viewBox="0 0 28 24" fill="none" stroke="#fff" strokeWidth="1.500"><path d="M1 0v4h14V0M1 24v-4h14v4M1 7h14v10H1zM22 0v6M22 12v12" /><path d="M20.500 7.500h3v3h-3z" fill="#fff" stroke="none" /></svg></TaskButton>
      <TaskButton $open aria-label="Edge"><EdgeLogo /></TaskButton>
      <TaskButton aria-label="File Explorer"><svg width="34" height="28" viewBox="0 0 34 28"><path d="M1 1q0-1 1-1h11l3 3v4H1z" fill="#e0a010" /><path d="M1 5h14l2-2h16v21H1z" fill="#ffd466" /><path d="M6 27V18q0-3 3-3h16q3 0 3 3v9h-6v-5H12v5z" fill="#3b97dd" /></svg></TaskButton>
      <TaskButton aria-label="Store"><svg width="36" height="36" viewBox="0 0 36 36"><path d="M9 10V1.500h18V10" fill="none" stroke="#2fa9e6" strokeWidth="2.500" /><rect x="1" y="5" width="34" height="30" rx="3" fill="#f0f0f0" /><path d="M9 5v2M27 5v2" stroke="#2fa9e6" strokeWidth="2.500" /><path d="M11 13h7v7h-7z" fill="#f25022" /><path d="M19 13h7v7h-7z" fill="#7fba00" /><path d="M11 21h7v7h-7z" fill="#00a4ef" /><path d="M19 21h7v7h-7z" fill="#ffb900" /></svg></TaskButton>
      <TaskButton aria-label="Mail"><svg width="36" height="34" viewBox="0 0 36 34"><path d="M0 12 18 0l18 12v6H0z" fill="#0f5fa8" /><path d="M3 11h30v14H3z" fill="#f3f3f3" /><path d="M0 12l18 11 18-11v21H0z" fill="#2aa5ea" /><path d="M0 33 36 14v19z" fill="#2a8fe0" /></svg><TaskBadge>27</TaskBadge></TaskButton>
      <TaskButton aria-label="YouTube"><svg width="36" height="26" viewBox="0 0 36 26"><rect width="36" height="26" rx="5" fill="#f00" /><path d="M14 8v10l9-5z" fill="#fff" /></svg></TaskButton>
      <TaskButton $open aria-label="WhatsApp">
        <svg width="37" height="37" viewBox="0 0 37 37"><path d="M1 36 3.500 27A17.500 17.500 0 1 1 10.500 33.500z" fill="#fff" /><circle cx="18.500" cy="18" r="14.800" fill="#3fc351" /><path d="M12 10q2-1 3 .5l1.500 3q.3 1-1.500 2.700 2 4 6 5.500l2-2.200q.8-.5 4 1.500 1 3-2.500 4.500c-6 2-16-7-14.500-12q.5-2.500 2-3.500z" fill="#fff" /></svg>
        <TaskBadge>3</TaskBadge>
      </TaskButton>
      <TaskButton $active aria-label="Brave"><BraveLion width={31} height={36} /></TaskButton>
      <TaskButton $open aria-label="Opera"><svg width="36" height="36" viewBox="0 0 36 36"><path fillRule="evenodd" d="M18 1a17 17 0 1 1 0 34 17 17 0 0 1 0-34zm0 4c-5 0-8 6-8 13s3 13 8 13 8-6 8-13-3-13-8-13z" fill="#e8192c" /><path d="M22 2q13 4 13 16T22 34q5-4 5-16T22 2z" fill="#ff4b4b" /></svg></TaskButton>
      <TaskButton $open aria-label="Color blocks"><svg width="33" height="36" viewBox="0 0 33 36"><path d="M0 0l32 1 1 33-31 2z" fill="#10181c" /><path d="M0 0l17 1v17L1 18z" fill="#d03a2c" /><path d="M19 1h14v15l-14 1z" fill="#37b42c" /><path d="M1 20h16v14L2 36z" fill="#c5c12a" /><path d="M19 19l14-1v14l-14 2z" fill="#4712b0" /></svg></TaskButton>
      <TaskButton $open aria-label="Word">
        <svg width="36" height="36" viewBox="0 0 36 36"><path d="M3 1h27v26H3q-3-13 0-26z" fill="#3565b5" /><path d="M6 3h20v20H4z" fill="#8fb0e6" /><path d="M9 5h26l-2 30-24-3z" fill="#f4f7fd" /><text x="5" y="20" fontSize="17" fontWeight="700" fontStyle="italic" fontFamily={'"Liberation Serif", serif'} fill="#1f4b9e">W</text><path d="M24 10h8M24 14h8M23 18h8M12 23h19M12 27h19M12 31h18" stroke="#3565b5" strokeWidth="1.500" /></svg>
      </TaskButton>
      <Tray>
        <Weather>
          <svg width="36" height="32" viewBox="0 0 36 32"><circle cx="19" cy="16" r="15" fill="#fba61a" /><path d="M5 23q14 6 28-3-3 11-14 11-9 0-14-8z" fill="#f07a1c" /><path d="M4 6h14M7 12h14M0 18h26M2 24h24" stroke="#fbe7a6" strokeWidth="2.500" strokeLinecap="round" /><circle cx="27" cy="9.500" r="9" fill="#c8281e" /><text x="27" y="14.500" fontSize="14" textAnchor="middle" fill="#fff" fontFamily={ui}>1</text></svg>
          27°C
        </Weather>
        <TrayButton $w={36} aria-label="Show hidden icons"><svg width="20" height="11" viewBox="0 0 20 11" fill="none" stroke="#fff" strokeWidth="1.600"><path d="M1 10l9-9 9 9" /></svg></TrayButton>
        <TrayButton $w={36} aria-label="Meet Now"><svg width="16" height="22" viewBox="0 0 16 22" fill="none" stroke="#fff" strokeWidth="1.300"><path d="M1 5h9v12H1zM10 9l5-2v8l-5-2M2 2q5-2.500 11 0M2 20q5 2.500 11 0" /></svg></TrayButton>
        <TrayButton $w={36} aria-label="Battery"><svg width="24" height="20" viewBox="0 0 24 20" fill="none"><path d="M1 2h20v11H1z" stroke="#fff" strokeWidth="1.300" /><path d="M3 4h6v7H3zM21.500 5h2v5h-2z" fill="#fff" /><circle cx="16" cy="13" r="6.500" fill="#14901e" /><path d="M16 9q5 4 0 8-5-4 0-8zM16 12v6" stroke="#fff" /></svg></TrayButton>
        <TrayButton $w={36} aria-label="Wi-Fi"><svg width="20" height="20" viewBox="0 0 20 20" fill="none" stroke="#fff" strokeWidth="1.300"><path d="M1 18Q2 3 19 2" opacity=".6" /><path d="M6 18Q7 8 19 7M10.500 18q1-6 8.500-6.500" /><circle cx="16" cy="17" r="2" fill="#fff" stroke="none" /></svg></TrayButton>
        <TrayButton $w={36} aria-label="Volume"><svg width="24" height="20" viewBox="0 0 24 20" fill="none" stroke="#fff" strokeWidth="1.300"><path d="M1 7h4l5-5v16l-5-5H1zM13 7q2.500 3 0 6" /><path d="M16 5q4 5 0 10M19 3q6 7 0 14" opacity=".5" /></svg></TrayButton>
        <TrayButton $w={52}>ENG</TrayButton>
        <Clock>17:28<br />04-12-2023</Clock>
        <ActionCenterButton $w={76} aria-label="Notifications"><svg width="25" height="25" viewBox="0 0 25 25" fill="none" stroke="#fff" strokeWidth="1.500"><path d="M1 1h23v18h-8l-4 4-4-4H1z" /></svg></ActionCenterButton>
        <ShowDesktop aria-label="Show desktop" />
      </Tray>
    </Taskbar>
  );
}

export default function App() {
  return (
    <Page>
      <GlobalStyle />
      <BrowserChrome />
      <Simulation />
      <Navigation />
      <DesktopBar />
    </Page>
  );
}
